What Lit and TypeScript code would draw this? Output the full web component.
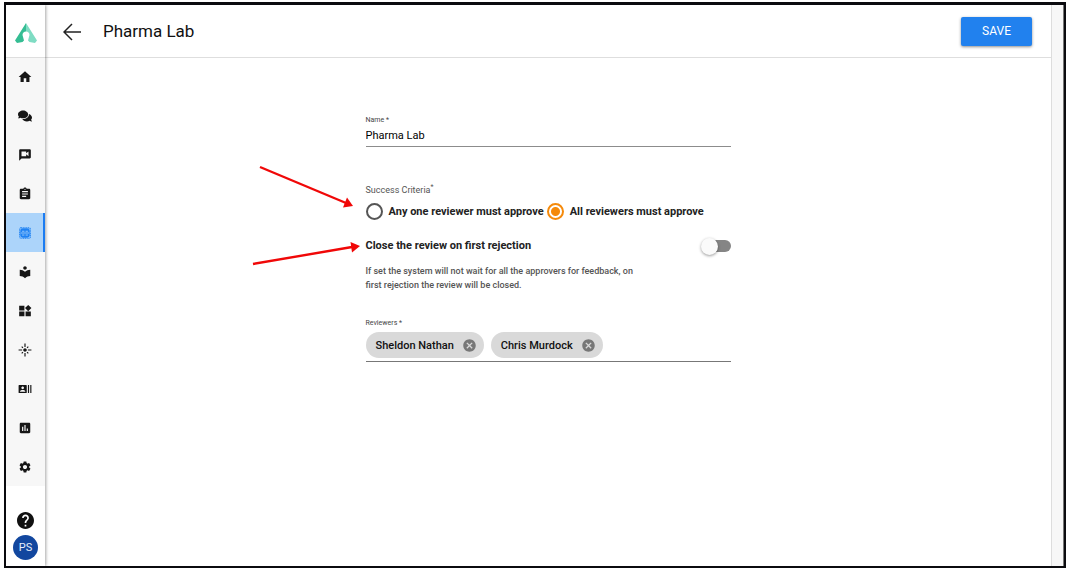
import { LitElement, html, css, svg } from "lit";
import { customElement, property, state } from "lit/decorators.js";

interface NavItem {
  label: string;
  viewBox?: string;
  path: string;
  active?: boolean;
}

const NAV: NavItem[] = [
  { label: "Home", viewBox: "1 1 22 22", path: "M10 20v-6h4v6h5v-8h3L12 3 2 12h3v8z" },
  {
    label: "Discussions",
    viewBox: "0 0 576 512",
    path: "M416 192c0-88.4-93.1-160-208-160S0 103.6 0 192c0 34.3 14.1 65.9 38 92-13.4 30.2-35.5 54.2-35.8 54.5-2.2 2.3-2.8 5.7-1.5 8.7S4.8 352 8 352c36.6 0 66.9-12.3 88.7-25 32.2 15.7 70.3 25 111.3 25 114.9 0 208-71.6 208-160zm122 220c23.9-26 38-57.7 38-92 0-66.9-53.5-124.2-129.3-148.1.9 6.6 1.3 13.3 1.3 20.1 0 105.9-107.7 192-240 192-10.8 0-21.3-.8-31.7-1.9C207.8 439.6 281.8 480 368 480c41 0 79.1-9.2 111.3-25 21.8 12.7 52.1 25 88.7 25 3.2 0 6.1-1.9 7.3-4.8 1.3-2.9.7-6.3-1.5-8.7-.3-.3-22.4-24.2-35.8-54.5z",
  },
  { label: "Video chat", path: "M20 2H4c-1.1 0-1.99.9-1.99 2L2 22l4-4h14c1.1 0 2-.9 2-2V4c0-1.1-.9-2-2-2zm-2 12l-4-3.2V14H6V6h8v3.2L18 6v8z" },
  { label: "Assignments", path: "M19 3h-4.18C14.4 1.84 13.3 1 12 1c-1.3 0-2.4.84-2.82 2H5c-1.1 0-2 .9-2 2v14c0 1.1.9 2 2 2h14c1.1 0 2-.9 2-2V5c0-1.1-.9-2-2-2zm-7 0c.55 0 1 .45 1 1s-.45 1-1 1-1-.45-1-1 .45-1 1-1zm2 14H7v-2h7v2zm3-4H7v-2h10v2zm0-4H7V7h10v2z" },
  { label: "Review groups", active: true, path: "" },
  { label: "Library", path: "M12 11.55C9.64 9.35 6.48 8 3 8v11c3.48 0 6.64 1.35 9 3.55 2.36-2.19 5.52-3.55 9-3.55V8c-3.48 0-6.64 1.35-9 3.55zM12 8c1.66 0 3-1.34 3-3s-1.34-3-3-3-3 1.34-3 3 1.34 3 3 3z" },
  { label: "Widgets", path: "M13 13v8h9v-8zM2 21h9v-8H2zM2 3v8h9V3zM17.5 1.5L12 7l5.5 5.5L23 7z" },
  { label: "Highlights", path: "M7 11H1v2h6v-2zm2.17-3.24L7.05 5.64 5.64 7.05l2.12 2.12 1.41-1.41zM13 1h-2v6h2V1zm5.36 6.05l-1.41-1.41-2.12 2.12 1.41 1.41 2.12-2.12zM17 11v2h6v-2h-6zm-5-2c-1.66 0-3 1.34-3 3s1.34 3 3 3 3-1.34 3-3-1.34-3-3-3zm2.83 7.24l2.12 2.12 1.41-1.41-2.12-2.12-1.41 1.41zm-9.19.71l1.41 1.41 2.12-2.12-1.41-1.41-2.12 2.12zM11 23h2v-6h-2v6z" },
  { label: "Contacts", path: "M21 5v14h2V5h-2zm-4 14h2V5h-2v14zM14 5H2c-.55 0-1 .45-1 1v12c0 .55.45 1 1 1h12c.55 0 1-.45 1-1V6c0-.55-.45-1-1-1zM8 7.75c1.24 0 2.25 1.01 2.25 2.25S9.24 12.25 8 12.25 5.75 11.24 5.75 10 6.76 7.75 8 7.75zM12.5 16.5h-9v-.75c0-1.5 3-2.25 4.5-2.25s4.5.75 4.5 2.25v.75z" },
  { label: "Reports", path: "M19 3H5c-1.1 0-2 .9-2 2v14c0 1.1.9 2 2 2h14c1.1 0 2-.9 2-2V5c0-1.1-.9-2-2-2zM9 17H7v-7h2v7zm4 0h-2V7h2v10zm4 0h-2v-4h2v4z" },
  { label: "Settings", path: "M19.14 12.94c.04-.3.06-.61.06-.94 0-.32-.02-.64-.07-.94l2.03-1.58c.18-.14.23-.41.12-.61l-1.92-3.32c-.12-.22-.37-.29-.59-.22l-2.39.96c-.5-.38-1.03-.7-1.62-.94L14.4 2.81c-.04-.24-.24-.41-.48-.41h-3.84c-.24 0-.43.17-.47.41L9.25 5.35c-.59.24-1.13.57-1.62.94l-2.39-.96c-.22-.08-.47 0-.59.22L2.74 8.87c-.12.21-.08.47.12.61l2.03 1.58c-.05.3-.09.63-.09.94s.02.64.07.94l-2.03 1.58c-.18.14-.23.41-.12.61l1.92 3.32c.12.22.37.29.59.22l2.39-.96c.5.38 1.03.7 1.62.94l.36 2.54c.05.24.24.41.48.41h3.84c.24 0 .44-.17.47-.41l.36-2.54c.59-.24 1.13-.56 1.62-.94l2.39.96c.22.08.47 0 .59-.22l1.92-3.32c.12-.22.07-.47-.12-.61l-2.01-1.58zM12 15.6c-1.98 0-3.6-1.62-3.6-3.6s1.62-3.6 3.6-3.6 3.6 1.62 3.6 3.6-1.62 3.6-3.6 3.6z" },
];

@customElement("side-rail")
export class SideRail extends LitElement {
  static styles = css`
    :host {
      display: flex;
      flex-direction: column;
      width: 39px;
      background: #fff;
      box-shadow: 1px 0 3px rgba(0, 0, 0, 0.35);
      z-index: 1;
    }
    .logo {
      display: grid;
      place-items: center;
      box-sizing: border-box;
      height: 52px;
      padding-top: 3px;
    }
    .list {
      display: flex;
      flex-direction: column;
      background: #f7f7f7;
      box-shadow: inset 0 1px #dedede;
    }
    .item {
      display: grid;
      place-items: center;
      height: 39px;
      border-right: 2px solid transparent;
      color: #161616;
    }
    .item.active {
      background: #acd4fa;
      border-right-color: #1b7cf2;
      color: #1f82f3;
    }
    .icon {
      display: block;
      width: 14px;
      height: 14px;
      fill: currentColor;
    }
    .foot {
      margin-top: auto;
      display: flex;
      flex-direction: column;
      align-items: center;
      gap: 6px;
      padding-bottom: 6px;
    }
    .help,
    .avatar {
      border: 0;
      padding: 0;
      font: 11px Roboto, sans-serif;
    }
    .help {
      background: none;
      color: #111;
    }
    .help svg {
      display: block;
      fill: currentColor;
    }
    .avatar {
      width: 25px;
      height: 25px;
      border-radius: 50%;
      background: #12479f;
      color: #e6eefb;
    }
  `;

  render() {
    return html`
      <div class="logo">
        <svg width="24" height="22" viewBox="0 0 24 22" aria-hidden="true">
          <path fill="#35bd93" d="M12 1L1 18.500l2 2.500 5.500-1 1.500-1.500-1.500-5.500c0-2 1.500-3.500 3.500-3.500z" />
          <path fill="#7fdcc3" d="M12 1l11 17.500-2 2.500-5.500-1-1.500-1.500 1.500-5.500c0-2-1.500-3.500-3.500-3.500z" />
        </svg>
      </div>
      <nav class="list" aria-label="Main">
        ${NAV.map(
          (n) => html`<a class="item ${n.active ? "active" : ""}" href="#" aria-label=${n.label}>
            <svg class="icon" viewBox=${n.viewBox ?? "0 0 24 24"}>
              ${n.active
                ? svg`<rect x="3" y="3" width="18" height="18" rx="2" fill="none" stroke="currentColor" stroke-width="2" stroke-dasharray="2 1" />
                    <rect x="4" y="4" width="16" height="16" rx="4" />
                    <path d="M7 9h4M13 9h4M5 12h14M7 15.500h4M13 15.500h4" stroke="#acd4fa" stroke-width="1.400" />`
                : svg`<path d=${n.path} />`}
            </svg>
          </a>`
        )}
      </nav>
      <div class="foot">
        <button class="help" aria-label="Help">
          <svg width="17" height="17" viewBox="2 2 20 20">
            <path d="M12 2C6.480 2 2 6.480 2 12s4.480 10 10 10 10-4.480 10-10S17.520 2 12 2zm1 17h-2v-2h2v2zm2.070-7.750l-.9.92C13.450 12.900 13 13.500 13 15h-2v-.5c0-1.100.45-2.100 1.170-2.830l1.240-1.260c.37-.36.59-.86.59-1.410 0-1.100-.9-2-2-2s-2 .9-2 2H8c0-2.210 1.790-4 4-4s4 1.790 4 4c0 .88-.36 1.680-.93 2.250z" />
          </svg>
        </button>
        <button class="avatar">PS</button>
      </div>
    `;
  }
}

@customElement("reviewer-chip")
export class ReviewerChip extends LitElement {
  @property() name = "";

  static styles = css`
    :host {
      display: flex;
      align-items: center;
      gap: 8px;
      height: 26px;
      padding: 0 7px 0 10px;
      border-radius: 13px;
      background: #d9d9d9;
      color: #111;
      font: 500 11px Roboto, sans-serif;
    }
    .remove {
      display: block;
      border: 0;
      padding: 0;
      background: none;
      color: #777;
    }
    .glyph {
      display: block;
      fill: currentColor;
    }
  `;

  render() {
    return html`<span>${this.name}</span>
      <button class="remove" type="button" aria-label="Remove ${this.name}">
        <svg class="glyph" width="15" height="15" viewBox="0 0 24 24">
          <path d="M12 2C6.470 2 2 6.470 2 12s4.470 10 10 10 10-4.470 10-10S17.530 2 12 2zm5 13.590L15.590 17 12 13.410 8.410 17 7 15.590 10.590 12 7 8.410 8.410 7 12 10.590 15.590 7 17 8.410 13.410 12 17 15.590z" />
        </svg>
      </button>`;
  }
}

@customElement("app-root")
export class AppRoot extends LitElement {
  @state() private reviewers = ["Sheldon Nathan", "Chris Murdock"];

  static styles = css`
    :host {
      display: block;
      box-sizing: border-box;
      min-height: 100vh;
      padding: 2px 3px 2px 4px;
      background: #fff;
      font-family: Roboto, sans-serif;
      color: #222;
    }
    .frame {
      display: flex;
      box-sizing: border-box;
      min-height: calc(100vh - 4px);
      border: 2px solid #0b0b0f;
      border-top-width: 3px;
    }
    .main {
      flex: 1;
      min-width: 0;
    }
    .gutter {
      width: 13px;
      background: #f7f7f7;
      border-left: 1px solid #ddd;
      border-right: 1px solid #777;
      box-sizing: border-box;
    }
    .bar {
      display: flex;
      align-items: center;
      gap: 20px;
      box-sizing: border-box;
      height: 53px;
      padding: 0 19px 0 18px;
      border-bottom: 1px solid #dedede;
    }
    .back {
      border: 0;
      padding: 0;
      background: none;
    }
    .back svg {
      display: block;
    }
    .title {
      margin: 0;
      flex: 1;
      font-size: 17px;
      font-weight: 400;
      color: #111;
    }
    .save {
      width: 71px;
      height: 29px;
      border: 0;
      border-radius: 2px;
      padding: 0;
      background: #2181ee;
      color: #fff;
      font: 400 12px Roboto, sans-serif;
      box-shadow: 0 1px 3px rgba(0, 0, 0, 0.45);
    }
    .form {
      position: relative;
      width: 365px;
      max-width: 100%;
      margin: 0 auto;
      padding-top: 56px;
    }
    .small {
      display: block;
      font-size: 7px;
      line-height: 12px;
      color: #444;
    }
    .name {
      display: block;
      box-sizing: border-box;
      width: 100%;
      height: 21px;
      border: 0;
      border-bottom: 1px solid #8c8c8c;
      outline: 0;
      padding: 0 0 2px;
      background: none;
      font: 400 11px Roboto, sans-serif;
      color: #000;
    }
    .criteria {
      border: 0;
      margin: 36px 0 0;
      padding: 0;
      min-width: 0;
    }
    .legend {
      padding: 0;
      font-size: 9px;
      line-height: 14px;
      color: #555;
    }
    .star {
      font-size: 7px;
      line-height: 0;
    }
    .options {
      display: flex;
      gap: 3px;
      padding-top: 6px;
    }
    .option {
      display: flex;
      align-items: center;
      gap: 6px;
      font-size: 11px;
      font-weight: 700;
      white-space: nowrap;
    }
    .radio {
      appearance: none;
      box-sizing: border-box;
      width: 17px;
      height: 17px;
      margin: 0;
      border: 2px solid #555;
      border-radius: 50%;
    }
    .radio:checked {
      border-color: #f58a0b;
      background: radial-gradient(circle, #f58a0b 4px, transparent 5px);
    }
    .row {
      display: flex;
      align-items: center;
      justify-content: space-between;
      margin-top: 17px;
      font-size: 11px;
      font-weight: 700;
      line-height: 18px;
    }
    .switch {
      appearance: none;
      position: relative;
      width: 27px;
      height: 12px;
      margin: 0;
      border-radius: 6px;
      background: #858585;
    }
    .switch::before {
      content: "";
      position: absolute;
      left: -3px;
      top: -2px;
      width: 17px;
      height: 17px;
      border-radius: 50%;
      background: #fafafa;
      box-shadow: 0 1px 3px rgba(0, 0, 0, 0.4);
    }
    .hint {
      max-width: 281px;
      margin: 9px 0 25px;
      font-size: 9px;
      font-weight: 500;
      line-height: 14px;
      color: #555;
    }
    .chips {
      display: flex;
      gap: 7px;
      padding: 3px 0;
      border-bottom: 1px solid #777;
    }
    .arrows {
      position: absolute;
      left: -116px;
      top: 104px;
      pointer-events: none;
    }
  `;

  render() {
    return html`
      <div class="frame">
        <side-rail></side-rail>
        <main class="main">
          <header class="bar">
            <button class="back" type="button" aria-label="Back">
              <svg width="20" height="20" viewBox="0 0 20 20" fill="none" stroke="#222" stroke-width="1.500">
                <path d="M18 11H1M9 3L1 11l8 8" />
              </svg>
            </button>
            <h1 class="title">Pharma Lab</h1>
            <button class="save" type="button">SAVE</button>
          </header>
          <form class="form">
            <label class="small" for="name">Name *</label>
            <input class="name" id="name" type="text" value="Pharma Lab" />
            <fieldset class="criteria">
              <legend class="legend">Success Criteria<sup class="star">*</sup></legend>
              <div class="options">
                <label class="option"><input class="radio" type="radio" name="criteria" />Any one reviewer must approve</label>
                <label class="option"><input class="radio" type="radio" name="criteria" checked />All reviewers must approve</label>
              </div>
            </fieldset>
            <div class="row">
              <label for="close">Close the review on first rejection</label>
              <input class="switch" id="close" type="checkbox" role="switch" />
            </div>
            <p class="hint">If set the system will not wait for all the approvers for feedback, on first rejection the review will be closed.</p>
            <span class="small">Reviewers *</span>
            <div class="chips">
              ${this.reviewers.map((r) => html`<reviewer-chip .name=${r}></reviewer-chip>`)}
            </div>
            <svg class="arrows" width="116" height="108" viewBox="0 0 116 108" aria-hidden="true">
              <g stroke="#f00808" stroke-width="2.400" fill="none">
                <path d="M10 5L96 41" />
                <path d="M3 102L102 85" />
              </g>
              <g fill="#f00808">
                <path d="M103 44L93 45.500 97 35.500z" />
                <path d="M110 84L102 90.500 100.500 80z" />
              </g>
            </svg>
          </form>
        </main>
        <div class="gutter"></div>
      </div>
    `;
  }
}
